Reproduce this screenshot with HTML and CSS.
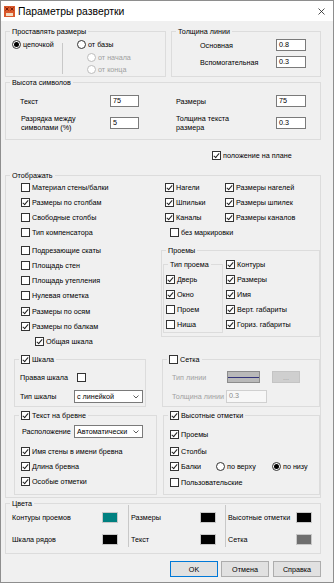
FILE: index.html
```html
<!DOCTYPE html>
<html lang="ru">

<head>
  <meta charset="UTF-8">
  <meta name="viewport" content="width=device-width, initial-scale=1.0">
  <title>Параметры развертки</title>
  <link rel="stylesheet" href="styles.css">
</head>

<body>
  <div class="window">
    <div class="titlebar">
      <svg class="app-icon" width="11" height="11" viewBox="0 0 11 11">
        <rect width="11" height="11" fill="#d9582b" />
        <path d="M1.5 1.5l3 3M4.5 1.5l-3 3M6.5 1.5l3 3M9.5 1.5l-3 3" stroke="#7a1e08" stroke-width="1" />
        <rect x="2" y="7" width="7" height="3" fill="#f3dcc2" />
      </svg>
      <span class="title">Параметры развертки</span>
      <svg class="close" width="7" height="7" viewBox="0 0 7 7">
        <path d="M0.5 0.5l6 6M6.5 0.5l-6 6" stroke="#222" stroke-width="0.8" />
      </svg>
    </div>

    <div class="content">
      <div class="top-row">
        <fieldset class="grp g-dims">
          <legend>Проставлять размеры</legend>
          <div class="dims">
            <div class="dims-left">
              <label class="opt sm"><span class="rb on"></span>цепочкой</label>
            </div>
            <div class="vsep"></div>
            <div class="dims-right">
              <label class="opt sm"><span class="rb"></span>от базы</label>
              <label class="opt sm sub off"><span class="rb"></span>от начала</label>
              <label class="opt sm sub off last"><span class="rb"></span>от конца</label>
            </div>
          </div>
        </fieldset>
        <fieldset class="grp g-line">
          <legend>Толщина линии</legend>
          <div class="line-grid">
            <span>Основная</span><span class="inp">0.8</span>
            <span>Вспомогательная</span><span class="inp">0.3</span>
          </div>
        </fieldset>
      </div>

      <fieldset class="grp g-sym">
        <legend>Высота символов</legend>
        <div class="sym-grid">
          <span>Текст</span><span class="inp">75</span><span></span>
          <span>Размеры</span><span class="inp">75</span>
          <span class="two">Разрядка между<br>символами (%)</span><span class="inp">5</span><span></span>
          <span>Толщина текста<br>размера</span><span class="inp">0.3</span>
        </div>
      </fieldset>

      <label class="opt sm plan"><span class="cb on"></span>положение на плане</label>

      <fieldset class="grp g-show">
        <legend>Отображать</legend>
        <div class="show-top">
          <div class="list-left">
            <label class="opt"><span class="cb"></span>Материал стены/балки</label>
            <label class="opt"><span class="cb on"></span>Размеры по столбам</label>
            <label class="opt"><span class="cb"></span>Свободные столбы</label>
            <label class="opt"><span class="cb"></span>Тип компенсатора</label>
            <label class="opt gap3"><span class="cb"></span>Подрезающие скаты</label>
            <label class="opt"><span class="cb"></span>Площадь стен</label>
            <label class="opt"><span class="cb"></span>Площадь утепления</label>
            <label class="opt"><span class="cb"></span>Нулевая отметка</label>
            <label class="opt gap1"><span class="cb on"></span>Размеры по осям</label>
            <label class="opt"><span class="cb on"></span>Размеры по балкам</label>
            <label class="opt ind"><span class="cb on"></span>Общая шкала</label>
          </div>

          <div class="show-right">
            <div class="fix">
              <div class="fix-col">
                <label class="opt"><span class="cb on"></span>Нагели</label>
                <label class="opt"><span class="cb on"></span>Шпильки</label>
                <label class="opt"><span class="cb on"></span>Каналы</label>
                <label class="opt ind5"><span class="cb"></span>без маркировки</label>
              </div>
              <div class="fix-col">
                <label class="opt"><span class="cb on"></span>Размеры нагелей</label>
                <label class="opt"><span class="cb on"></span>Размеры шпилек</label>
                <label class="opt"><span class="cb on"></span>Размеры каналов</label>
              </div>
            </div>

            <fieldset class="grp g-open">
              <legend>Проемы</legend>
              <div class="open-body">
                <fieldset class="grp g-type">
                  <legend>Тип проема</legend>
                  <div class="type-body">
                    <label class="opt"><span class="cb on"></span>Дверь</label>
                    <label class="opt"><span class="cb on"></span>Окно</label>
                    <label class="opt"><span class="cb"></span>Проем</label>
                    <label class="opt"><span class="cb"></span>Ниша</label>
                  </div>
                </fieldset>
                <div class="open-list">
                  <label class="opt"><span class="cb on"></span>Контуры</label>
                  <label class="opt"><span class="cb on"></span>Размеры</label>
                  <label class="opt"><span class="cb on"></span>Имя</label>
                  <label class="opt"><span class="cb on"></span>Верт. габариты</label>
                  <label class="opt"><span class="cb on"></span>Гориз. габариты</label>
                </div>
              </div>
            </fieldset>
          </div>
        </div>

        <div class="show-mid">
          <fieldset class="grp g-scale">
            <legend><label class="opt sm"><span class="cb on"></span>Шкала</label></legend>
            <div class="scale-body">
              <div class="frow"><span class="w57">Правая шкала</span><span class="cb"></span></div>
              <div class="frow r2">
                <span class="w54">Тип шкалы</span>
                <div class="sel">с линейкой
                  <svg width="6" height="4" viewBox="0 0 6 4"><path d="M0.5 0.5l2.5 2.5 2.5-2.5" fill="none" stroke="#333" stroke-width="0.8" /></svg>
                </div>
              </div>
            </div>
          </fieldset>

          <fieldset class="grp g-grid">
            <legend><label class="opt sm"><span class="cb"></span>Сетка</label></legend>
            <div class="grid-body">
              <div class="frow">
                <span class="w55">Тип линии</span>
                <span class="lsw"><i></i></span>
                <span class="more">...</span>
              </div>
              <div class="frow r2">
                <span class="w54">Толщина линии</span>
                <span class="inp dis">0.3</span>
              </div>
            </div>
          </fieldset>
        </div>

        <div class="show-bot">
          <fieldset class="grp g-log">
            <legend><label class="opt sm"><span class="cb on"></span>Текст на бревне</label></legend>
            <div class="log-body">
              <div class="frow r2 first">
                <span class="w52">Расположение</span>
                <div class="sel">Автоматически
                  <svg width="6" height="4" viewBox="0 0 6 4"><path d="M0.5 0.5l2.5 2.5 2.5-2.5" fill="none" stroke="#333" stroke-width="0.8" /></svg>
                </div>
              </div>
              <div class="log-opts">
                <label class="opt"><span class="cb on"></span>Имя стены в имени бревна</label>
                <label class="opt"><span class="cb on"></span>Длина бревна</label>
                <label class="opt"><span class="cb on"></span>Особые отметки</label>
              </div>
            </div>
          </fieldset>

          <fieldset class="grp g-elev">
            <legend><label class="opt sm"><span class="cb on"></span>Высотные отметки</label></legend>
            <div class="elev-body">
              <label class="opt"><span class="cb on"></span>Проемы</label>
              <label class="opt gap2"><span class="cb on"></span>Столбы</label>
              <div class="opt">
                <label class="opt w46"><span class="cb on"></span>Балки</label>
                <label class="opt w56"><span class="rb"></span>по верху</label>
                <label class="opt"><span class="rb on"></span>по низу</label>
              </div>
              <label class="opt gap1"><span class="cb"></span>Пользовательские</label>
            </div>
          </fieldset>
        </div>
      </fieldset>

      <fieldset class="grp g-col">
        <legend>Цвета</legend>
        <div class="col-body">
          <div class="csec s1">
            <div class="crow"><span class="clbl">Контуры проемов</span><span class="sw teal"></span></div>
            <div class="crow"><span class="clbl">Шкала рядов</span><span class="sw black"></span></div>
          </div>
          <div class="csep"></div>
          <div class="csec s2">
            <div class="crow"><span class="clbl">Размеры</span><span class="sw black"></span></div>
            <div class="crow"><span class="clbl">Текст</span><span class="sw black"></span></div>
          </div>
          <div class="csep"></div>
          <div class="csec s3">
            <div class="crow"><span class="clbl">Высотные отметки</span><span class="sw black"></span></div>
            <div class="crow"><span class="clbl">Сетка</span><span class="sw gray"></span></div>
          </div>
        </div>
      </fieldset>

      <div class="buttons">
        <span class="btn ok">OK</span>
        <span class="btn">Отмена</span>
        <span class="btn last">Справка</span>
      </div>
    </div>
  </div>
</body>

</html>
```

FILE: styles.css
```css
* {
  margin: 0;
  padding: 0;
  box-sizing: border-box;
}

body {
  font-family: "Liberation Sans", Arial, sans-serif;
  font-size: 7.2px;
  line-height: 9px;
  color: #000;
  background: #fff;
}

.window {
  display: flex;
  flex-direction: column;
  width: 334px;
  height: 583px;
  border: 1px solid #8e8e8e;
  background: #f0f0f0;
}

/* title */
.titlebar {
  display: flex;
  align-items: center;
  flex: none;
  height: 20px;
  background: #fff;
}

.app-icon {
  margin: 1px 0 0 3px;
}

.title {
  margin-left: 3px;
  padding-top: 1px;
  font-size: 10.4px;
  line-height: 12px;
}

.close {
  margin: 0 8px 0 auto;
}

.content {
  padding: 6px 12px 0 4px;
}

/* groups */
.grp {
  min-width: 0;
  border: 1px solid #dcdcdc;
}

.grp > legend {
  height: 9px;
  margin-left: 4px;
  padding: 0 2px;
  line-height: 9px;
}

/* checkbox + radio */
.opt {
  display: flex;
  align-items: center;
  height: 15px;
  white-space: nowrap;
}

.opt.sm {
  height: 9px;
}

.cb,
.rb {
  position: relative;
  flex: none;
  width: 9px;
  height: 9px;
  margin-right: 2px;
  border: 1px solid #333;
  background: #fff;
}

.rb {
  border-radius: 50%;
}

.cb.on::after {
  content: "";
  position: absolute;
  left: 2px;
  top: 0;
  width: 2px;
  height: 5px;
  border: solid #222;
  border-width: 0 1px 1px 0;
  transform: rotate(40deg);
}

.rb.on::after {
  content: "";
  position: absolute;
  left: 1px;
  top: 1px;
  width: 5px;
  height: 5px;
  border-radius: 50%;
  background: #000;
}

.off {
  color: #a0a0a0;
}

.off .rb {
  border-color: #bcbcbc;
}

.inp {
  height: 12px;
  padding-left: 2px;
  line-height: 10px;
  border: 1px solid #7a7a7a;
  background: #fff;
}

.sel {
  display: flex;
  align-items: center;
  justify-content: space-between;
  width: 69px;
  height: 13px;
  padding: 0 3px 0 2px;
  border: 1px solid #7a7a7a;
  background: #fff;
}

/* row 1 */
.top-row {
  display: flex;
  gap: 5px;
}

.g-dims {
  width: 161px;
  height: 50px;
}

.g-line {
  width: 150px;
  height: 50px;
}

.dims {
  display: flex;
  padding: 4px 0 0 6px;
}

.dims-left {
  width: 50px;
}

.vsep {
  width: 1px;
  height: 31px;
  margin-top: 3px;
  background: #c8c8c8;
}

.dims-right {
  margin-left: 14px;
}

.dims-right .sub {
  margin: 4px 0 0 10px;
}

.dims-right .last {
  margin-top: 3px;
}

.line-grid {
  display: grid;
  grid-template-columns: 76px 30px;
  row-gap: 5px;
  align-items: center;
  padding: 3px 0 0 28px;
}

/* symbols */
.g-sym {
  height: 62px;
  margin-top: 1px;
}

.sym-grid {
  display: grid;
  grid-template-columns: 90px 29px 37px 100px 30px;
  grid-template-rows: 12px 18px;
  row-gap: 7px;
  align-items: center;
  padding: 8px 0 0 14px;
}

.sym-grid .two {
  padding-left: 1px;
}

.plan {
  margin: 11px 0 0 207px;
}

/* show */
.g-show {
  margin-top: 11px;
  padding-bottom: 2px;
}

.show-top {
  display: grid;
  grid-template-columns: 154px 160px;
}

.list-left {
  padding-left: 15px;
}

.gap3 {
  margin-top: 3px;
}

.gap2 {
  margin-top: 2px;
}

.gap1 {
  margin-top: 1px;
}

.list-left .ind {
  margin-left: 14px;
}

.fix {
  display: flex;
  padding-left: 5px;
}

.fix-col:first-child {
  width: 60px;
}

.fix .ind5 {
  margin-left: 5px;
}

.g-open {
  margin: 6px 0 0 1px;
  padding-bottom: 3px;
}

.open-body {
  display: flex;
  padding-left: 1px;
}

.g-type {
  width: 60px;
  margin-top: 5px;
}

.type-body {
  padding: 3px 0 0 2px;
}

.open-list {
  margin-left: 3px;
  padding-top: 2px;
}

.show-mid {
  display: flex;
  margin-top: 6px;
}

.g-scale {
  width: 132px;
  margin-left: 8px;
}

.scale-body {
  padding: 7px 0 3px 5px;
}

.frow {
  display: flex;
  align-items: center;
  height: 12px;
}

.frow.r2 {
  height: 13px;
  margin-top: 7px;
}

.frow.first {
  margin-top: 0;
}

.w57 { width: 57px; }
.w55 { width: 55px; }
.w54 { width: 54px; }
.w52 { width: 52px; }
.w46 { width: 46px; }
.w56 { width: 56px; }

.g-grid {
  flex: 1;
  margin-left: 16px;
}

.grid-body {
  padding: 7px 0 3px 9px;
  color: #a0a0a0;
}

.lsw {
  display: flex;
  align-items: center;
  width: 33px;
  height: 12px;
  border: 1px solid #8c8c8c;
  background: #b9b9b9;
}

.lsw i {
  display: block;
  width: 100%;
  height: 1px;
  background: #34347a;
}

.more {
  display: flex;
  align-items: center;
  justify-content: center;
  width: 28px;
  height: 12px;
  margin-left: 12px;
  border: 1px solid #c4c4c4;
  background: #cfcfcf;
  color: #9a9a9a;
}

.inp.dis {
  width: 41px;
  height: 13px;
  border-color: #d0d0d0;
  background: #f7f7f7;
  color: #8a8a8a;
}

.show-bot {
  display: flex;
  margin-top: 4px;
}

.g-log {
  width: 143px;
  margin-left: 8px;
}

.log-body {
  padding: 5px 0 5px 7px;
}

.log-opts {
  margin: 6px 0 0 -1px;
}

.g-elev {
  flex: 1;
  margin-left: 6px;
}

.elev-body {
  padding: 7px 0 4px 6px;
}

/* colors */
.g-col {
  margin-top: 1px;
}

.col-body {
  display: grid;
  grid-template-columns: 122px 1px 96px 1px 1fr;
  padding-bottom: 6px;
}

.csec {
  padding-top: 4px;
}

.crow {
  display: flex;
  align-items: center;
  height: 11px;
}

.crow + .crow {
  margin-top: 11px;
}

.s1 { padding-left: 6px; }
.s1 .clbl { width: 90px; }
.s2 { padding-left: 2px; }
.s2 .clbl { width: 69px; }
.s3 { padding-left: 2px; }
.s3 .clbl { width: 68px; }

.csep {
  height: 42px;
  margin-top: -3px;
  background: #c8c8c8;
}

.sw {
  width: 16px;
  height: 11px;
  border: 1px solid #c8c8c8;
}

.teal { background: #008080; }
.black { background: #000; }
.gray { background: #6e6e6e; }

/* buttons */
.buttons {
  display: flex;
  justify-content: flex-end;
  margin-top: 7px;
}

.btn {
  display: flex;
  align-items: center;
  justify-content: center;
  width: 48px;
  height: 16px;
  margin-left: 3px;
  border: 1px solid #adadad;
  background: #e1e1e1;
}

.btn.ok {
  border-color: #0078d7;
}

.btn.last {
  margin-left: 4px;
}
```
